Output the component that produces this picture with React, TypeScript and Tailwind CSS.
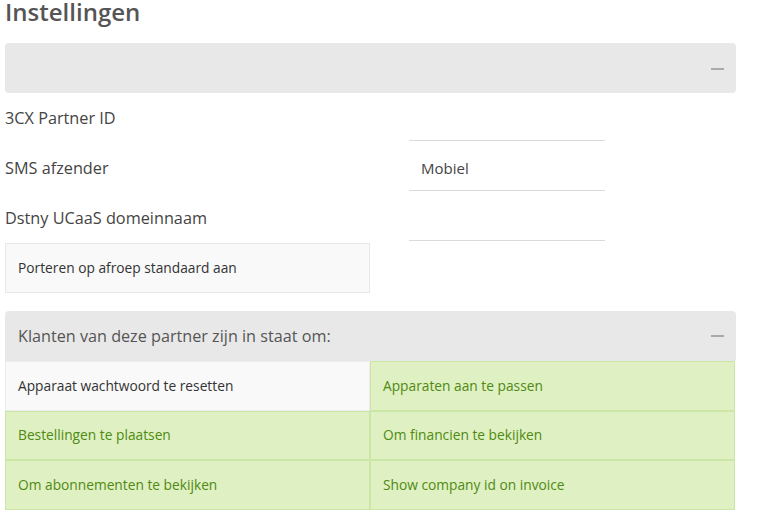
import { useState } from "react";

const fields = [
  { label: "3CX Partner ID", value: "" },
  { label: "SMS afzender", value: "Mobiel" },
  { label: "Dstny UCaaS domeinnaam", value: "" },
];

const permissions = [
  { label: "Apparaat wachtwoord te resetten", on: false },
  { label: "Apparaten aan te passen", on: true },
  { label: "Bestellingen te plaatsen", on: true },
  { label: "Om financien te bekijken", on: true },
  { label: "Om abonnementen te bekijken", on: true },
  { label: "Show company id on invoice", on: true },
];

function Minus() {
  return <span className="block w-[13px] h-[2px] bg-[#aaaaaa]" />;
}

export default function App() {
  const [values, setValues] = useState(fields.map((f) => f.value));

  return (
    <div className="w-[765px] h-[515px] bg-white pl-[5px] font-['Open_Sans',sans-serif] text-[#444]">
      <div className="w-[731px]">
        <h1 className="text-[24px] leading-[24px] font-semibold text-[#555] h-[43px]">
          Instellingen
        </h1>

        <div className="h-[50px] rounded-[4px] bg-[#e8e8e8] flex items-center justify-end pr-[12px] pt-[2px]">
          <Minus />
        </div>

        <div className="flex flex-col -mt-[2px]">
          {fields.map((f, i) => (
            <div key={f.label} className="flex h-[50px] items-center">
              <label className="w-[404px] text-[16.25px] pt-[5px]">{f.label}</label>
              <input
                type="text"
                value={values[i]}
                onChange={(e) => {
                  const next = [...values];
                  next[i] = e.target.value;
                  setValues(next);
                }}
                className="w-[196px] h-[50px] border-b border-[#dadada] px-[12px] pt-[4px] text-[15px] text-[#444] outline-none bg-transparent"
              />
            </div>
          ))}
        </div>

        <div className="mt-[2px] w-[365px] h-[50px] bg-[#f9f9f9] border border-[#e8e8e8] flex items-center px-[12px] text-[13.75px] text-[#333]">
          Porteren op afroep standaard aan
        </div>

        <div className="mt-[18px] h-[50px] rounded-t-[4px] bg-[#e8e8e8] flex items-center justify-between pl-[13px] pr-[12px]">
          <span className="text-[16.2px] text-[#555]">Klanten van deze partner zijn in staat om:</span>
          <Minus />
        </div>

        <div className="grid grid-cols-2 w-[730px]">
          {permissions.map((p) => (
            <div
              key={p.label}
              className={
                p.on
                  ? "h-[49.5px] flex items-center px-[12px] pt-[1px] text-[13.75px] bg-[#dff0c2] border border-[#cbe6a6] text-[#4f8a12]"
                  : "h-[49.5px] flex items-center px-[12px] pt-[1px] text-[13.75px] bg-[#f9f9f9] border border-[#ececec] text-[#333]"
              }
            >
              {p.label}
            </div>
          ))}
        </div>
      </div>
    </div>
  );
}
